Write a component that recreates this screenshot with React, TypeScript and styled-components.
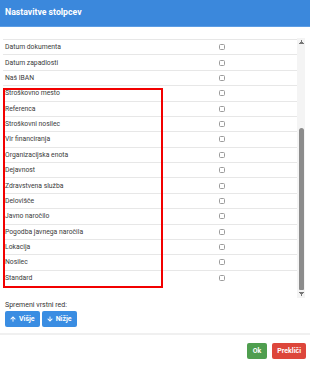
import React from "react";
import styled, { createGlobalStyle } from "styled-components";
import { FaArrowUp, FaArrowDown } from "react-icons/fa";

const GlobalStyle = createGlobalStyle`
  html, body {
    margin: 0;
    padding: 0;
    background: #fff;
  }
  body {
    font-family: Roboto, "Liberation Sans", Arial, sans-serif;
    color: #333;
  }
`;

const Modal = styled.div`
  width: 310px;
  height: 367px;
  display: flex;
  flex-direction: column;
  background: #fff;
`;

const Header = styled.header`
  height: 27px;
  box-sizing: border-box;
  background: #3b88dc;
  border-bottom: 1px solid #5c9de4;
  padding: 0 5px 3px;
  display: flex;
  align-items: center;
  color: #fff;
  font-size: 8.7px;
  font-weight: 700;
`;

const ListWrap = styled.div`
  position: relative;
  margin: 11px 5px 0 3px;
  height: 260px;
  display: grid;
  grid-template-columns: 1fr 8px;
`;

const List = styled.div`
  padding-top: 1px;
  overflow: hidden;
`;

const Row = styled.div`
  display: grid;
  grid-template-columns: 143px 1fr;
  align-items: center;
  height: 15.375px;
  box-sizing: border-box;
  border-top: 1px solid #e7e7e7;
  font-size: 6.8px;
  color: #3a3a3a;
`;

const Label = styled.span`
  padding-left: 2px;
  white-space: nowrap;
`;

const Check = styled.input.attrs({ type: "checkbox" })`
  appearance: none;
  justify-self: center;
  width: 6px;
  height: 6px;
  margin: 0;
  border: 1px solid #9c9c9c;
  border-radius: 1.5px;
  background: #fff;
`;

/* drawn scrollbar: track, arrows and thumb */
const ScrollTrack = styled.div`
  display: flex;
  flex-direction: column;
  background: #f4f4f4;
`;

const ScrollArrow = styled.div<{ $dir: "up" | "down" }>`
  height: 8px;
  flex: none;
  background: ${({ $dir }) =>
      $dir === "up"
        ? "conic-gradient(from 150deg at 50% 0, #777 60deg, transparent 0)"
        : "conic-gradient(from -30deg at 50% 100%, #777 60deg, transparent 0)"}
    center / 5px 4px no-repeat;
`;

const ScrollGap = styled.div`
  height: 82px;
  flex: none;
`;

const ScrollThumb = styled.div`
  flex: 1;
  margin: 0 1.5px;
  background: #8c8c8c;
  border-radius: 2.5px 2.5px 1px 1px;
`;

const Highlight = styled.div`
  position: absolute;
  left: 0;
  top: 50px;
  width: 160px;
  height: 200px;
  box-sizing: border-box;
  border: 2px solid #f20000;
  pointer-events: none;
`;

const OrderSection = styled.section`
  margin: 3px 0 0 5px;
`;

const OrderLabel = styled.div`
  font-size: 7px;
  line-height: 9px;
  color: #333;
`;

const OrderButtons = styled.div`
  display: flex;
  gap: 2px;
  margin-top: 1px;
`;

const OrderButton = styled.button`
  height: 16px;
  padding: 0 5px;
  display: inline-flex;
  align-items: center;
  gap: 3px;
  border: none;
  border-radius: 2px;
  background: #3a8de2;
  color: #fff;
  font-family: inherit;
  font-size: 7px;
  font-weight: 700;

  svg {
    width: 6px;
    height: 6px;
  }
`;

const Footer = styled.footer`
  margin-top: 6px;
  border-top: 2px solid #f0f0f0;
  padding: 8px 4px 0 0;
  display: flex;
  justify-content: flex-end;
  gap: 5px;
`;

const ActionButton = styled.button<{ $tone: "ok" | "cancel" }>`
  height: 16px;
  padding: 0 ${({ $tone }) => ($tone === "ok" ? "6px" : "5px")};
  border: none;
  border-radius: 2px;
  background: ${({ $tone }) => ($tone === "ok" ? "#4f9e4f" : "#dd463b")};
  color: #fff;
  font-family: inherit;
  font-size: 7px;
  font-weight: 700;
`;

const columns = [
  "Datum dokumenta",
  "Datum zapadlosti",
  "Naš IBAN",
  "Stroškovno mesto",
  "Referenca",
  "Stroškovni nosilec",
  "Vir financiranja",
  "Organizacijska enota",
  "Dejavnost",
  "Zdravstvena služba",
  "Delovišče",
  "Javno naročilo",
  "Pogodba javnega naročila",
  "Lokacija",
  "Nosilec",
  "Standard",
];

export default function App() {
  return (
    <>
      <GlobalStyle />
      <Modal>
        <Header>Nastavitve stolpcev</Header>

        <ListWrap>
          <List>
            {columns.map((name) => (
              <Row key={name}>
                <Label>{name}</Label>
                <Check readOnly />
              </Row>
            ))}
          </List>
          <ScrollTrack>
            <ScrollArrow $dir="up" />
            <ScrollGap />
            <ScrollThumb />
            <ScrollArrow $dir="down" />
          </ScrollTrack>
          <Highlight />
        </ListWrap>

        <OrderSection>
          <OrderLabel>Spremeni vrstni red:</OrderLabel>
          <OrderButtons>
            <OrderButton>
              <FaArrowUp /> Višje
            </OrderButton>
            <OrderButton>
              <FaArrowDown /> Nižje
            </OrderButton>
          </OrderButtons>
        </OrderSection>

        <Footer>
          <ActionButton $tone="ok">Ok</ActionButton>
          <ActionButton $tone="cancel">Prekliči</ActionButton>
        </Footer>
      </Modal>
    </>
  );
}
